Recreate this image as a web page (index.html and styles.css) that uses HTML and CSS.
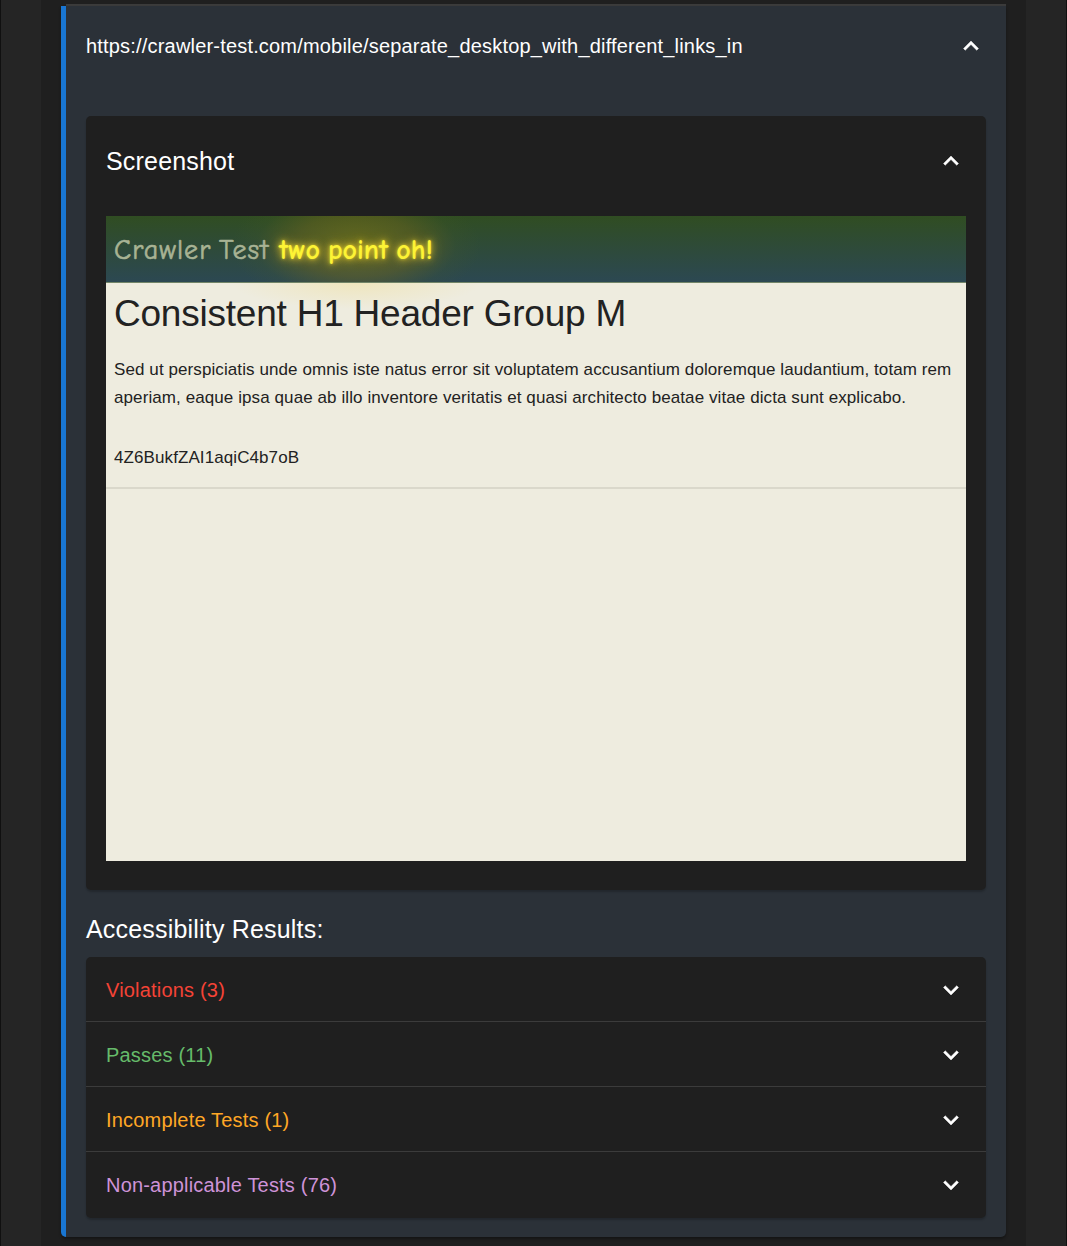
FILE: index.html
```html
<!DOCTYPE html>
<html lang="en">
<head>
<meta charset="utf-8">
<title>Accessibility Results</title>
<link rel="stylesheet" href="styles.css">
</head>
<body>
<svg width="0" height="0" class="defs">
  <symbol id="up" viewBox="0 0 24 24"><path d="m12 8-6 6 1.41 1.41L12 10.83l4.59 4.58L18 14z"/></symbol>
  <symbol id="down" viewBox="0 0 24 24"><path d="M16.59 8.59 12 13.17 7.41 8.59 6 10l6 6 6-6z"/></symbol>
</svg>
<main class="column">
  <div class="divider"></div>
  <section class="page-result">
    <header class="page-head">
      <span class="url">https://crawler-test.com/mobile/separate_desktop_with_different_links_in</span>
      <svg class="icon"><use href="#up"/></svg>
    </header>
    <section class="paper shot">
      <header class="shot-head">
        <h2>Screenshot</h2>
        <svg class="icon"><use href="#up"/></svg>
      </header>
      <div class="preview">
        <div class="banner"><span class="brand">Crawler Test</span><span class="glow">two point oh!</span></div>
        <div class="content">
          <h1>Consistent H1 Header Group M</h1>
          <p><span class="line line-a">Sed ut perspiciatis unde omnis iste natus error sit voluptatem accusantium doloremque laudantium, totam rem</span><span class="line line-b">aperiam, eaque ipsa quae ab illo inventore veritatis et quasi architecto beatae vitae dicta sunt explicabo.</span></p>
          <p class="token">4Z6BukfZAI1aqiC4b7oB</p>
        </div>
      </div>
    </section>
    <h2 class="results-title">Accessibility Results:</h2>
    <div class="paper results">
      <div class="row violations"><span>Violations (3)</span><svg class="icon"><use href="#down"/></svg></div>
      <div class="row passes"><span>Passes (11)</span><svg class="icon"><use href="#down"/></svg></div>
      <div class="row incomplete"><span>Incomplete Tests (1)</span><svg class="icon"><use href="#down"/></svg></div>
      <div class="row na"><span>Non-applicable Tests (76)</span><svg class="icon"><use href="#down"/></svg></div>
    </div>
  </section>
</main>
</body>
</html>
```
FILE: styles.css
```css
* { box-sizing: border-box; }
body {
  margin: 0;
  height: 1246px;
  overflow: hidden;
  padding: 0 40px 0 40px;
  background: #252525;
  border-left: 1px solid #101010;
  border-right: 1px solid #101010;
  color: #fff;
  font-family: "Liberation Sans", Arial, sans-serif;
  font-size: 20px;
}
.defs { display: block; }
h1, h2, p { margin: 0; font-weight: 400; }
.column {
  height: 1246px;
  padding: 4px 20px 0;
  background: #1f1f1f;
}
.divider { height: 2px; margin-left: 5px; background: #3b3b3b; }
.page-result {
  height: 1231px;
  padding: 0 20px 0 20px;
  border-left: 5px solid #1976d2;
  border-radius: 0 0 5px 5px;
  background: #2b3138;
  box-shadow: 0 2px 3px rgba(0, 0, 0, .35);
}
.page-head {
  display: flex;
  justify-content: space-between;
  align-items: center;
  height: 110px;
  padding: 0 0 30px;
}
.url { letter-spacing: .1876px; }
.icon { width: 30px; height: 30px; fill: #fff; stroke: #fff; stroke-width: .35; flex: none; }
.paper {
  border-radius: 5px;
  background: #1f1f1f;
  box-shadow: 0 2px 2px rgba(0, 0, 0, .2);
}
.shot { height: 774px; padding: 0 20px; }
.shot-head {
  display: flex;
  justify-content: space-between;
  align-items: center;
  height: 100px;
  padding-bottom: 10px;
}
h2 { font-size: 25px; line-height: 40px; letter-spacing: .1875px; }
.preview {
  height: 645px;
  overflow: hidden;
  background: #eeecdf;
  color: #222;
}
.banner {
  display: flex;
  align-items: center;
  gap: 8px;
  height: 67px;
  padding: 2px 8px 0;
  background:
    radial-gradient(ellipse 125px 62px at 250px 30px, rgba(135, 125, 20, .62), rgba(115, 105, 25, .45) 50%, rgba(80, 95, 30, .12) 80%, rgba(70, 95, 30, 0)),
    linear-gradient(#304d22, #2c4852);
  border-bottom: 1px solid #728568;
  font-family: "Comic Sans MS", "Comic Neue", Lato, sans-serif;
  font-size: 28px;
  color: #a8b394;
}
.brand {
  width: 157px;
  letter-spacing: 1px;
  word-spacing: -2.5px;
  white-space: nowrap;
  -webkit-text-stroke: .6px #a8b394;
}
.glow {
  color: #fdf435;
  font-weight: 700;
  word-spacing: -2px;
  white-space: nowrap;
  text-shadow:
    0 0 3px rgba(255, 235, 40, .6),
    0 0 7px rgba(240, 210, 50, .8),
    0 0 12px rgba(225, 195, 50, .8);
}
.content {
  height: 206px;
  padding: 1px 8px 0;
  background: radial-gradient(ellipse 125px 26px at 250px 0, rgba(240, 220, 140, .4), rgba(240, 225, 150, 0));
  border-bottom: 2px solid #dad8cb;
}
h1 { height: 72px; font-size: 37px; line-height: 59px; letter-spacing: -.22px; white-space: nowrap; }
.content p { font-size: 17px; line-height: 28px; letter-spacing: .09px; }
.line { display: block; white-space: nowrap; }
.content .token { margin-top: 32px; }
.results-title { height: 67px; padding-top: 19px; }
.row {
  display: flex;
  justify-content: space-between;
  align-items: center;
  height: 65px;
  padding: 2px 20px 0;
  letter-spacing: .1876px;
  border-bottom: 1px solid #3b3b3b;
}
.row:last-child { height: 66px; padding-top: 0; border-bottom: 0; }
.violations { color: #f44336; }
.passes { color: #66bb6a; }
.incomplete { color: #ffa726; }
.na { color: #ce93d8; }
```
